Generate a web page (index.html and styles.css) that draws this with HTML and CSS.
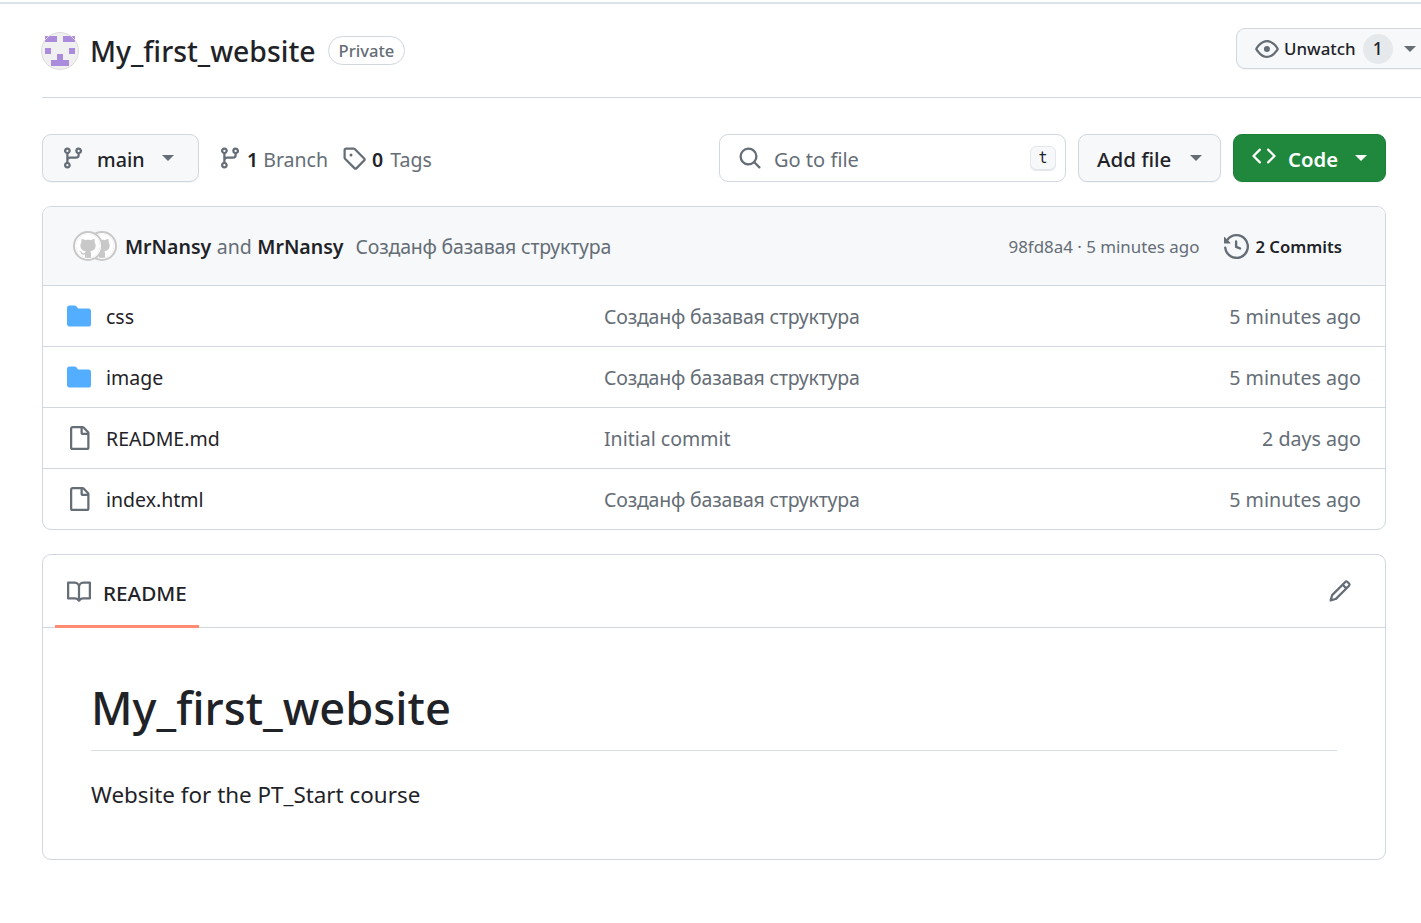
FILE: index.html
```html
<!DOCTYPE html>
<html lang="en">
<head>
<meta charset="utf-8">
<title>My_first_website</title>
<link rel="stylesheet" href="styles.css">
</head>
<body>
<div class="topline"></div>
<main class="page">
  <header class="repo-head">
    <svg class="avatar" viewBox="0 0 38 38" width="38" height="38">
      <circle cx="19" cy="19" r="18.5" fill="#f0f0f0"/>
      <g fill="#ab8bdc">
        <rect x="4" y="4" width="12" height="6"/><rect x="22" y="4" width="12" height="6"/>
        <rect x="4" y="16" width="6" height="6"/><rect x="28" y="16" width="6" height="6"/>
        <rect x="16" y="22" width="6" height="6"/><rect x="10" y="28" width="18" height="6"/>
      </g>
      <circle cx="19" cy="19" r="18.5" fill="none" stroke="#dcdcdc"/>
    </svg>
    <h2 class="repo-name">My_first_website</h2>
    <span class="pill">Private</span>
    <div class="watch">
      <svg class="icon i24" viewBox="0 0 16 16"><path d="M8 2c1.981 0 3.671.992 4.933 2.078 1.27 1.091 2.187 2.345 2.637 3.023a1.62 1.62 0 0 1 0 1.798c-.45.678-1.367 1.932-2.637 3.023C11.67 13.008 9.981 14 8 14c-1.981 0-3.671-.992-4.933-2.078C1.797 10.83.88 9.576.43 8.898a1.62 1.62 0 0 1 0-1.798c.45-.677 1.367-1.931 2.637-3.022C4.33 2.992 6.019 2 8 2ZM1.679 7.932a.12.12 0 0 0 0 .136c.411.622 1.241 1.75 2.366 2.717C5.176 11.758 6.527 12.5 8 12.5c1.473 0 2.825-.742 3.955-1.715 1.124-.967 1.954-2.096 2.366-2.717a.12.12 0 0 0 0-.136c-.412-.621-1.242-1.75-2.366-2.717C10.824 4.242 9.473 3.5 8 3.5c-1.473 0-2.825.742-3.955 1.715-1.124.967-1.954 2.096-2.366 2.717ZM8 10a2 2 0 1 1-.001-3.999A2 2 0 0 1 8 10Z"/></svg>
      <span class="watch-label">Unwatch</span>
      <span class="counter">1</span>
      <span class="caret"></span>
    </div>
  </header>

  <section class="toolbar">
    <button class="btn branch-btn">
      <svg class="icon i24" viewBox="0 0 16 16"><path d="M9.5 3.25a2.25 2.25 0 1 1 3 2.122V6A2.5 2.5 0 0 1 10 8.5H6a1 1 0 0 0-1 1v1.128a2.251 2.251 0 1 1-1.5 0V5.372a2.25 2.25 0 1 1 1.5 0v1.836A2.493 2.493 0 0 1 6 7h4a1 1 0 0 0 1-1v-.628A2.25 2.25 0 0 1 9.5 3.25Zm-6 0a.75.75 0 1 0 1.5 0 .75.75 0 0 0-1.5 0Zm8.25-.75a.75.75 0 1 0 0 1.5.75.75 0 0 0 0-1.5ZM4.25 12a.75.75 0 1 0 0 1.5.75.75 0 0 0 0-1.5Z"/></svg>
      <span class="btn-text">main</span>
      <span class="caret"></span>
    </button>
    <a class="meta-link branches">
      <svg class="icon i24" viewBox="0 0 16 16"><path d="M9.5 3.25a2.25 2.25 0 1 1 3 2.122V6A2.5 2.5 0 0 1 10 8.5H6a1 1 0 0 0-1 1v1.128a2.251 2.251 0 1 1-1.5 0V5.372a2.25 2.25 0 1 1 1.5 0v1.836A2.493 2.493 0 0 1 6 7h4a1 1 0 0 0 1-1v-.628A2.25 2.25 0 0 1 9.5 3.25Zm-6 0a.75.75 0 1 0 1.5 0 .75.75 0 0 0-1.5 0Zm8.25-.75a.75.75 0 1 0 0 1.5.75.75 0 0 0 0-1.5ZM4.25 12a.75.75 0 1 0 0 1.5.75.75 0 0 0 0-1.5Z"/></svg>
      <span><b>1</b> Branch</span>
    </a>
    <a class="meta-link tags">
      <svg class="icon i24" viewBox="0 0 16 16"><path d="M1 7.775V2.75C1 1.784 1.784 1 2.75 1h5.025c.464 0 .91.184 1.238.513l6.25 6.25a1.75 1.75 0 0 1 0 2.474l-5.026 5.026a1.75 1.75 0 0 1-2.474 0l-6.25-6.25A1.752 1.752 0 0 1 1 7.775Zm1.5 0c0 .066.026.13.073.177l6.25 6.25a.25.25 0 0 0 .354 0l5.025-5.025a.25.25 0 0 0 0-.354l-6.25-6.25a.25.25 0 0 0-.177-.073H2.75a.25.25 0 0 0-.25.25ZM6 5a1 1 0 1 1 0 2 1 1 0 0 1 0-2Z"/></svg>
      <span><b>0</b> Tags</span>
    </a>
    <div class="search">
      <svg class="icon i24" viewBox="0 0 16 16"><path d="M10.68 11.74a6 6 0 0 1-7.922-8.982 6 6 0 0 1 8.982 7.922l3.04 3.04a.749.749 0 0 1-.326 1.275.749.749 0 0 1-.734-.215ZM11.5 7a4.499 4.499 0 1 0-8.997 0A4.499 4.499 0 0 0 11.5 7Z"/></svg>
      <span class="search-text">Go to file</span>
      <kbd class="key">t</kbd>
    </div>
    <button class="btn add-btn"><span class="btn-text">Add file</span><span class="caret"></span></button>
    <button class="btn code-btn">
      <svg class="icon i24" viewBox="0 0 16 16"><path d="m11.28 3.22 4.25 4.25a.75.75 0 0 1 0 1.06l-4.25 4.25a.749.749 0 0 1-1.275-.326.749.749 0 0 1 .215-.734L13.94 8l-3.72-3.72a.749.749 0 0 1 .326-1.275.749.749 0 0 1 .734.215Zm-6.56 0a.751.751 0 0 1 1.042.018.751.751 0 0 1 .018 1.042L2.06 8l3.72 3.72a.749.749 0 0 1-.326 1.275.749.749 0 0 1-.734-.215L.47 8.53a.75.75 0 0 1 0-1.06Z"/></svg>
      <span class="btn-text">Code</span>
      <span class="caret"></span>
    </button>
  </section>

  <section class="files">
    <div class="commit-bar">
      <div class="avatars">
        <svg class="octo back" viewBox="0 0 16 16"><path fill-rule="evenodd" d="M0 0h16v16H0ZM8 0c4.42 0 8 3.58 8 8a8.013 8.013 0 0 1-5.45 7.59c-.4.08-.55-.17-.55-.38 0-.27.01-1.13.01-2.2 0-.75-.25-1.23-.54-1.48 1.78-.2 3.65-.88 3.65-3.95 0-.88-.31-1.59-.82-2.15.08-.2.36-1.02-.08-2.12 0 0-.67-.22-2.2.82-.64-.18-1.32-.27-2-.27-.68 0-1.36.09-2 .27-1.53-1.03-2.2-.82-2.2-.82-.44 1.1-.16 1.92-.08 2.12-.51.56-.82 1.28-.82 2.15 0 3.06 1.86 3.75 3.64 3.95-.23.2-.44.55-.51 1.07-.46.21-1.61.55-2.33-.66-.15-.24-.6-.83-1.23-.82-.67.01-.27.38.01.53.34.19.73.9.82 1.13.16.45.68 1.31 2.69.94 0 .67.01 1.3.01 1.49 0 .21-.15.45-.55.38A7.995 7.995 0 0 1 0 8c0-4.42 3.58-8 8-8Z"/></svg>
        <svg class="octo front" viewBox="0 0 16 16"><path fill-rule="evenodd" d="M0 0h16v16H0ZM8 0c4.42 0 8 3.58 8 8a8.013 8.013 0 0 1-5.45 7.59c-.4.08-.55-.17-.55-.38 0-.27.01-1.13.01-2.2 0-.75-.25-1.23-.54-1.48 1.78-.2 3.65-.88 3.65-3.95 0-.88-.31-1.59-.82-2.15.08-.2.36-1.02-.08-2.12 0 0-.67-.22-2.2.82-.64-.18-1.32-.27-2-.27-.68 0-1.36.09-2 .27-1.53-1.03-2.2-.82-2.2-.82-.44 1.1-.16 1.92-.08 2.12-.51.56-.82 1.28-.82 2.15 0 3.06 1.86 3.75 3.64 3.95-.23.2-.44.55-.51 1.07-.46.21-1.61.55-2.33-.66-.15-.24-.6-.83-1.23-.82-.67.01-.27.38.01.53.34.19.73.9.82 1.13.16.45.68 1.31 2.69.94 0 .67.01 1.3.01 1.49 0 .21-.15.45-.55.38A7.995 7.995 0 0 1 0 8c0-4.42 3.58-8 8-8Z"/></svg>
      </div>
      <span class="authors"><b>MrNansy</b> and <b>MrNansy</b></span>
      <span class="commit-msg">Созданф базавая структура</span>
      <span class="commit-hash">98fd8a4 · 5 minutes ago</span>
      <span class="commits">
        <svg class="icon i25" viewBox="0 0 16 16"><path d="m.427 1.927 1.215 1.215a8.002 8.002 0 1 1-1.6 5.685.75.75 0 1 1 1.493-.154 6.5 6.5 0 1 0 1.18-4.458l1.358 1.358A.25.25 0 0 1 3.896 6H.25A.25.25 0 0 1 0 5.75V2.104a.25.25 0 0 1 .427-.177ZM7.75 4a.75.75 0 0 1 .75.75v2.992l2.028.812a.75.75 0 0 1-.557 1.392l-2.5-1A.751.751 0 0 1 7 8.25v-3.5A.75.75 0 0 1 7.75 4Z"/></svg>
        <span>2 Commits</span>
      </span>
    </div>
    <div class="row">
      <svg class="icon i24 folder" viewBox="0 0 16 16"><path d="M1.75 1A1.75 1.75 0 0 0 0 2.75v10.5C0 14.216.784 15 1.75 15h12.5A1.75 1.75 0 0 0 16 13.25v-8.5A1.75 1.75 0 0 0 14.25 3H7.5a.25.25 0 0 1-.2-.1l-.9-1.2C6.07 1.26 5.55 1 5 1H1.75Z"/></svg>
      <span class="name">css</span><span class="msg cyr">Созданф базавая структура</span><span class="age">5 minutes ago</span>
    </div>
    <div class="row">
      <svg class="icon i24 folder" viewBox="0 0 16 16"><path d="M1.75 1A1.75 1.75 0 0 0 0 2.75v10.5C0 14.216.784 15 1.75 15h12.5A1.75 1.75 0 0 0 16 13.25v-8.5A1.75 1.75 0 0 0 14.25 3H7.5a.25.25 0 0 1-.2-.1l-.9-1.2C6.07 1.26 5.55 1 5 1H1.75Z"/></svg>
      <span class="name">image</span><span class="msg cyr">Созданф базавая структура</span><span class="age">5 minutes ago</span>
    </div>
    <div class="row">
      <svg class="icon i24" viewBox="0 0 16 16"><path d="M2 1.75C2 .784 2.784 0 3.75 0h6.586c.464 0 .909.184 1.237.513l2.914 2.914c.329.328.513.773.513 1.237v9.586A1.75 1.75 0 0 1 13.25 16h-9.5A1.75 1.75 0 0 1 2 14.25Zm1.75-.25a.25.25 0 0 0-.25.25v12.5c0 .138.112.25.25.25h9.5a.25.25 0 0 0 .25-.25V6h-2.75A1.75 1.75 0 0 1 9 4.25V1.5Zm6.75.062V4.25c0 .138.112.25.25.25h2.688l-.011-.013-2.914-2.914-.013-.011Z"/></svg>
      <span class="name">README.md</span><span class="msg">Initial commit</span><span class="age">2 days ago</span>
    </div>
    <div class="row">
      <svg class="icon i24" viewBox="0 0 16 16"><path d="M2 1.75C2 .784 2.784 0 3.75 0h6.586c.464 0 .909.184 1.237.513l2.914 2.914c.329.328.513.773.513 1.237v9.586A1.75 1.75 0 0 1 13.25 16h-9.5A1.75 1.75 0 0 1 2 14.25Zm1.75-.25a.25.25 0 0 0-.25.25v12.5c0 .138.112.25.25.25h9.5a.25.25 0 0 0 .25-.25V6h-2.75A1.75 1.75 0 0 1 9 4.25V1.5Zm6.75.062V4.25c0 .138.112.25.25.25h2.688l-.011-.013-2.914-2.914-.013-.011Z"/></svg>
      <span class="name">index.html</span><span class="msg cyr">Созданф базавая структура</span><span class="age">5 minutes ago</span>
    </div>
  </section>

  <section class="readme">
    <div class="readme-tabs">
      <div class="tab">
        <svg class="icon i24" viewBox="0 0 16 16"><path d="M0 1.75A.75.75 0 0 1 .75 1h4.253c1.227 0 2.317.59 3 1.501A3.743 3.743 0 0 1 11.006 1h4.245a.75.75 0 0 1 .75.75v10.5a.75.75 0 0 1-.75.75h-4.507a2.25 2.25 0 0 0-1.591.659l-.622.621a.75.75 0 0 1-1.06 0l-.622-.621A2.25 2.25 0 0 0 5.258 13H.75a.75.75 0 0 1-.75-.75Zm7.251 10.324.004-5.073-.002-2.253A2.25 2.25 0 0 0 5.003 2.5H1.5v9h3.757a3.75 3.75 0 0 1 1.994.574ZM8.755 4.75l-.004 7.322a3.752 3.752 0 0 1 1.992-.572H14.5v-9h-3.495a2.25 2.25 0 0 0-2.25 2.25Z"/></svg>
        <span>README</span>
      </div>
      <svg class="icon i24 pencil" viewBox="0 0 16 16"><path d="M11.013 1.427a1.75 1.75 0 0 1 2.474 0l1.086 1.086a1.75 1.75 0 0 1 0 2.474l-8.61 8.61c-.21.21-.47.364-.756.445l-3.251.93a.75.75 0 0 1-.927-.928l.929-3.25c.081-.286.235-.547.445-.758l8.61-8.61Zm.176 4.823L9.75 4.81l-6.286 6.287a.253.253 0 0 0-.064.108l-.558 1.953 1.953-.558a.253.253 0 0 0 .108-.064Zm1.238-3.763a.25.25 0 0 0-.354 0L10.811 3.75l1.439 1.44 1.263-1.263a.25.25 0 0 0 0-.354Z"/></svg>
    </div>
    <article class="readme-body">
      <h1>My_first_website</h1>
      <p>Website for the PT_Start course</p>
    </article>
  </section>
</main>
</body>
</html>
```

FILE: styles.css
```css
* { box-sizing: border-box; }
html, body { margin: 0; padding: 0; }
body {
  width: 1421px;
  height: 923px;
  overflow: hidden;
  background: #fff;
  color: #1f2328;
  font-family: "Noto Sans", "Open Sans", sans-serif;
  font-size: 19.5px;
}
.topline { height: 4px; border-top: 2px solid #fff; background: #dde2ea; }
.page { padding: 0 35px 0 42px; }
.icon { fill: #656d76; flex: none; display: block; }
.i24 { width: 24px; height: 24px; }
.i25 { width: 25px; height: 25px; }
b { font-weight: 600; color: #1f2328; }
.caret { flex: none; width: 0; height: 0; border-left: 6px solid transparent; border-right: 6px solid transparent; border-top: 6px solid #656d76; }

.repo-head { position: relative; height: 94px; margin-right: -35px; border-bottom: 1px solid #d0d7de; display: flex; align-items: flex-start; }
.avatar { margin: 28px 11px 0 -1px; flex: none; }
.repo-name { margin: 29px 12px 0 0; font-size: 28.4px; line-height: 36px; font-weight: 500; white-space: nowrap; }
.pill { margin-top: 32px; height: 29px; line-height: 27px; padding: 0 10px; border: 1px solid #d0d7de; border-radius: 15px; color: #656d76; font-size: 16.6px; font-weight: 500; }
.watch { position: absolute; left: 1194px; top: 24px; width: 200px; height: 41px; display: flex; align-items: center; padding-left: 18px; background: #f6f8fa; border: 1px solid #d0d7de; border-radius: 9px; box-shadow: 0 1px 0 rgba(31,35,40,.04); }
.watch-label { margin-left: 5px; font-size: 16.9px; font-weight: 500; }
.counter { width: 30px; height: 30px; margin-left: 7px; border-radius: 15px; background: #e6e9eb; text-align: center; line-height: 28px; font-size: 17.5px; font-weight: 500; }
.watch .caret { margin-left: 11px; }

.toolbar { display: flex; align-items: center; margin-top: 36px; height: 48px; }
.btn { display: flex; align-items: center; height: 48px; border: 1px solid #d0d7de; border-radius: 9px; background: #f6f8fa; box-shadow: 0 1px 0 rgba(31,35,40,.04); font: inherit; color: #1f2328; padding: 0; }
.btn-text { font-weight: 500; font-size: 20.5px; padding-top: 2px; }
.branch-btn { width: 157px; padding-left: 18px; }
.branch-btn .btn-text { margin-left: 12px; font-size: 19.7px; }
.branch-btn .caret { margin-left: 17px; }
.meta-link { display: flex; align-items: center; color: #656d76; white-space: nowrap; }
.meta-link span { margin-left: 5px; padding-top: 2px; }
.branches { margin-left: 19px; }
.tags { margin-left: 14px; }
.tags span { margin-left: 6px; word-spacing: 2px; }
.search { display: flex; align-items: center; margin-left: auto; width: 347px; height: 48px; padding: 0 9px 0 18px; border: 1px solid #d0d7de; border-radius: 9px; background: #fff; }
.search-text { margin-left: 12px; padding-top: 2px; font-size: 20px; color: #656d76; flex: 1; }
.key { width: 26px; height: 25px; border: 1px solid #e4e7eb; border-radius: 6px; background: #f6f8fa; box-shadow: inset 0 -1px 0 #e1e4e8; font-family: "DejaVu Sans Mono", monospace; font-size: 15px; line-height: 23px; text-align: center; color: #1f2328; }
.add-btn { width: 143px; margin-left: 12px; padding-left: 18px; }
.add-btn .caret { margin-left: 19px; }
.code-btn { width: 153px; margin-left: 12px; padding-left: 18px; background: #1f883d; border-color: #1a7f37; color: #fff; }
.code-btn .icon { fill: #fff; margin-top: -4px; }
.code-btn .btn-text { margin-left: 12px; font-weight: 600; font-size: 20.3px; }
.code-btn .caret { margin-left: 17px; border-top-color: #fff; }

.files { margin-top: 24px; border: 1px solid #d0d7de; border-radius: 9px; overflow: hidden; }
.commit-bar { display: flex; align-items: center; height: 78px; padding: 0 43px 0 30px; background: #f6f8fa; color: #656d76; }
.avatars { position: relative; width: 44px; height: 30px; flex: none; }
.octo { position: absolute; top: 0; width: 30px; height: 30px; padding: 1px; fill: #c8c8c8; background: #fff; border: 2px solid #c8c8c8; border-radius: 50%; }
.octo.back { left: 14px; }
.octo.front { left: 0; }
.authors { margin-left: 8px; white-space: nowrap; word-spacing: .5px; }
.commit-msg { margin-left: 12px; white-space: nowrap; flex: 1; letter-spacing: -.2px; }
.commit-hash { font-size: 16.9px; white-space: nowrap; }
.commits { display: flex; align-items: center; margin-left: 25px; font-size: 16.7px; font-weight: 600; color: #1f2328; white-space: nowrap; }
.commits span { margin-left: 6px; }

.row { display: flex; align-items: center; height: 61px; border-top: 1px solid #d0d7de; padding: 0 24px; }
.row .name { width: 498px; margin-left: 15px; color: #1f2328; white-space: nowrap; }
.row .msg { flex: 1; color: #656d76; white-space: nowrap; }
.row .cyr { letter-spacing: -.2px; }
.row .age { color: #656d76; white-space: nowrap; font-size: 19.65px; }
.folder { fill: #54aeff; }

.readme { margin-top: 24px; border: 1px solid #d0d7de; border-radius: 9px; height: 306px; overflow: hidden; }
.readme-tabs { display: flex; align-items: flex-end; justify-content: space-between; height: 73px; border-bottom: 1px solid #d0d7de; padding: 0 33px 0 12px; }
.tab { display: flex; align-items: center; width: 144px; height: 73px; padding: 3px 0 0 12px; margin-bottom: -1px; border-bottom: 3px solid #fd8c73; font-weight: 500; font-size: 20.7px; }
.tab span { margin-left: 12px; padding-top: 3px; }
.pencil { margin-bottom: 24px; }
.readme-body { padding: 48px 48px 0; }
.readme-body h1 { margin: 0; height: 75px; font-size: 45.3px; line-height: 64px; font-weight: 500; border-bottom: 1px solid #d8dee4; }
.readme-body p { margin: 24px 0 0; line-height: 40px; font-size: 22.4px; }
```
